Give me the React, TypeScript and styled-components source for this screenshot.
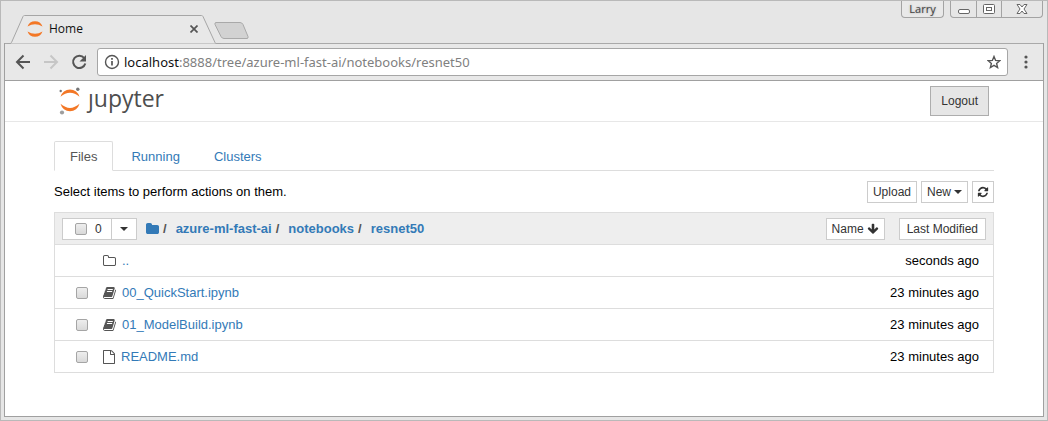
import React from "react";
import styled, { createGlobalStyle } from "styled-components";

const Global = createGlobalStyle`
  *, *::before, *::after { box-sizing: border-box; }
  body { margin: 0; font: 13px/20px "Liberation Sans", Arial, sans-serif; color: #000; background: #fff; }
  button, input { font: inherit; margin: 0; }
  a { color: #337ab7; text-decoration: none; }
`;

const Window = styled.div`
  min-height: 100vh;
  display: flex;
  flex-direction: column;
  padding: 0 3px 3px;
  border: 1px solid #b9b9b9;
  background: #e6e6e6;
`;

const TitleBar = styled.header`
  display: flex;
  justify-content: space-between;
  height: 42px;
`;

const TabStrip = styled.div`
  display: flex;
  align-items: flex-end;
`;

const BrowserTab = styled.div`
  position: relative;
  display: flex;
  align-items: center;
  width: 214px;
  height: 28px;
  margin-left: 3px;
  padding: 0 23px 0 20px;
  font: 12px/20px "Open Sans", "Noto Sans", sans-serif;
  color: #111;
`;

const TabShape = styled.svg`
  position: absolute;
  inset: 0;
  width: 214px;
  height: 29px;
`;

const TabTitle = styled.span`
  position: relative;
  flex: 1;
  margin-left: 6px;
`;

const TabIcon = styled.svg`
  position: relative;
`;

const BareButton = styled.button`
  position: relative;
  display: flex;
  align-items: center;
  justify-content: center;
  padding: 0;
  border: 0;
  background: none;
  color: #555;
`;

const NewTab = styled(BareButton)`
  align-self: flex-end;
  margin: 0 0 3px -8px;
`;

const WindowControls = styled.div`
  display: flex;
  align-items: flex-start;
  padding-right: 1px;
`;

const ProfileButton = styled.button`
  width: 43px;
  height: 17px;
  margin-right: 6px;
  padding: 0;
  border: 1px solid #a3a3a3;
  border-top: 0;
  border-radius: 0 0 4px 4px;
  background: #e9e9e9;
  color: #444;
  font: 11px/16px "Open Sans", "Noto Sans", sans-serif;
  text-shadow: 0 0 2px #999;
`;

const ControlGroup = styled.div`
  display: flex;
  height: 17px;
  border: 1px solid #a3a3a3;
  border-top: 0;
  border-radius: 0 0 4px 4px;
`;

const ControlButton = styled(BareButton)<{ $wide?: boolean }>`
  width: ${(p) => (p.$wide ? 41 : 25)}px;
  & + & { border-left: 1px solid #a3a3a3; }
`;

const Frame = styled.div`
  flex: 1;
  display: flex;
  flex-direction: column;
  border: 1px solid #a0a0a0;
  border-top: 0;
  background: #fff;
`;

const Toolbar = styled.div`
  display: flex;
  align-items: center;
  height: 38px;
  padding: 0 10px 0 8px;
  border-top: 1px solid #a9a9a9;
  border-bottom: 1px solid #a0a0a0;
  background: #e8e8e8;
`;

const NavButton = styled(BareButton)<{ $off?: boolean }>`
  width: 20px;
  height: 20px;
  margin-right: 8px;
  color: ${(p) => (p.$off ? "#c6c6c6" : "#555")};
`;

const AddressBar = styled.div`
  flex: 1;
  display: flex;
  align-items: center;
  height: 28px;
  padding: 0 6px;
  border: 1px solid #a6a6a6;
  border-radius: 3px;
  background: #fff;
  color: #808080;
  font: 13px/20px "Noto Sans", "Open Sans", sans-serif;
`;

const Address = styled.span`
  flex: 1;
  margin-left: 4px;
  white-space: nowrap;
`;

const Host = styled.span`
  color: #111;
`;

const MenuButton = styled(BareButton)`
  width: 15px;
  height: 20px;
  margin-left: 10px;
`;

const SiteHeader = styled.header`
  display: flex;
  align-items: center;
  justify-content: space-between;
  height: 41px;
  padding: 0 54px 0 54px;
  border-bottom: 1px solid #e7e7e7;
`;

const Logo = styled.a`
  display: flex;
  align-items: center;
  gap: 7px;
  color: #4e4e4e;
  font: 23px/32px "Open Sans", "Noto Sans", sans-serif;
`;

const Wordmark = styled.span`
  padding-bottom: 6px;
`;

const Logout = styled.button`
  height: 30px;
  padding: 0 10px;
  border: 1px solid #adadad;
  background: #e6e6e6;
  color: #333;
  font-size: 12px;
`;

const Main = styled.main`
  padding: 19px 49px 43px;
`;

const Tabs = styled.nav`
  display: flex;
  border-bottom: 1px solid #ddd;
`;

const TabLink = styled.a<{ $active?: boolean }>`
  height: 30px;
  margin: 0 2px -1px 0;
  padding: 5px 15px;
  border: 1px solid ${(p) => (p.$active ? "#ddd" : "transparent")};
  border-bottom-color: ${(p) => (p.$active ? "#fff" : "transparent")};
  border-radius: 2px 2px 0 0;
  color: ${(p) => (p.$active ? "#555" : "#337ab7")};
`;

const ActionRow = styled.div`
  display: flex;
  align-items: center;
  justify-content: space-between;
  padding: 10px 0 9px;
`;

const Actions = styled.div`
  display: flex;
  gap: 4px;
`;

const SmallButton = styled.button<{ $pad?: number }>`
  display: inline-flex;
  align-items: center;
  justify-content: center;
  gap: 3px;
  height: 22px;
  padding: 0 ${(p) => p.$pad ?? 5}px;
  border: 1px solid #ccc;
  background: #fff;
  color: #333;
  font-size: 12px;
  font-weight: 400;
  line-height: 18px;
`;

const FileTable = styled.table`
  width: 100%;
  border: 1px solid #ddd;
  border-spacing: 0;
`;

const HeadCell = styled.th<{ $right?: boolean }>`
  height: 31px;
  padding: 0 7px;
  background: #eee;
  text-align: ${(p) => (p.$right ? "right" : "left")};
`;

const HeadGroup = styled.div<{ $right?: boolean }>`
  display: flex;
  align-items: center;
  justify-content: ${(p) => (p.$right ? "flex-end" : "flex-start")};
  gap: ${(p) => (p.$right ? 14 : 0)}px;
`;

const Selector = styled.div`
  display: flex;
  height: 22px;
  margin-right: 9px;
  border: 1px solid #ccc;
  background: #fff;
  font-weight: 400;
`;

const SelectAll = styled.label`
  display: flex;
  align-items: center;
  gap: 8px;
  width: 48px;
  padding-left: 12px;
  font-size: 12px;
  color: #333;
`;

const SelectMenu = styled(BareButton)`
  width: 25px;
  border-left: 1px solid #ccc;
  color: #333;
`;

const Checkbox = styled.input.attrs({ type: "checkbox" })`
  appearance: none;
  display: block;
  flex: none;
  width: 12px;
  height: 12px;
  border: 1px solid #a5a5a5;
  border-radius: 2px;
  background: linear-gradient(#eee, #d9d9d9);
`;

const Crumbs = styled.nav`
  display: flex;
  align-items: center;
  color: #555;
`;

const CrumbLink = styled.a`
  display: flex;
  margin-right: 4px;
`;

const Slash = styled.span`
  margin-right: 9px;
`;

const Cell = styled.td<{ $kind: "check" | "name" | "time" }>`
  height: 32px;
  border-top: 1px solid #ddd;
  padding: 0 ${(p) => (p.$kind === "time" ? 14 : 0)}px 0 ${(p) => (p.$kind === "check" ? 21 : 0)}px;
  width: ${(p) => (p.$kind === "check" ? "48px" : "auto")};
  text-align: ${(p) => (p.$kind === "time" ? "right" : "left")};
  white-space: nowrap;
`;

const FileLink = styled.a`
  display: flex;
  align-items: center;
  gap: 6px;
  svg { color: #555; }
`;

const glyphs = {
  folder:
    "M1728 608v704q0 92-66 158t-158 66h-1216q-92 0-158-66t-66-158v-960q0-92 66-158t158-66h320q92 0 158 66t66 158v32h672q92 0 158 66t66 158z",
  folderOpen:
    "M1600 1312v-704q0-40-28-68t-68-28h-704q-40 0-68-28t-28-68v-64q0-40-28-68t-68-28h-320q-40 0-68 28t-28 68v960q0 40 28 68t68 28h1216q40 0 68-28t28-68zm128-704v704q0 92-66 158t-158 66h-1216q-92 0-158-66t-66-158v-960q0-92 66-158t158-66h320q92 0 158 66t66 158v32h672q92 0 158 66t66 158z",
  file:
    "M1596 380q28 28 48 76t20 88v1152q0 40-28 68t-68 28h-1344q-40 0-68-28t-28-68v-1600q0-40 28-68t68-28h896q40 0 88 20t76 48zm-444-244v376h376q-10-29-22-41l-313-313q-12-12-41-22zm384 1528v-1024h-416q-40 0-68-28t-28-68v-416h-768v1536h1280z",
  book:
    "M1703 478q40 57 18 129l-275 906q-19 64-76.5 107.5t-122.5 43.5h-923q-77 0-148.5-53.5t-99.5-131.5q-24-67-2-127 0-4 3-27t4-37q1-8-3-21.5t-3-19.5q2-11 8-21t16.5-23.5 16.5-23.5q23-38 45-91.5t30-91.5q3-10 .5-30t-.5-28q3-11 17-28t17-23q21-36 42-92t25-90q1-9-2.5-32t.5-28q4-13 22-30.5t22-22.5q19-26 42.5-84.5t27.5-96.5q1-8-3-25.5t-2-26.5q2-8 9-18t18-23 17-21q8-12 16.5-30.5t15-35 16-36 19.5-32 26.5-23.5 36-11.5 47.5 5.5l-1 3q38-9 51-9h761q74 0 114 56t18 130l-274 906q-36 119-71.5 153.5t-128.5 34.5h-869q-27 0-38 15-11 16-1 43 24 70 144 70h923q29 0 56-15.5t35-41.5l300-987q7-22 5-57 38 15 59 43zm-1064 2q-4 13 2 22.5t20 9.5h608q13 0 25.5-9.5t16.5-22.5l21-64q4-13-2-22.5t-20-9.5h-608q-13 0-25.5 9.5t-16.5 22.5zm-83 256q-4 13 2 22.5t20 9.5h608q13 0 25.5-9.5t16.5-22.5l21-64q4-13-2-22.5t-20-9.5h-608q-13 0-25.5 9.5t-16.5 22.5z",
  refresh:
    "M1639 1056q0 5-1 7-64 268-268 434.5t-478 166.5q-146 0-282.5-55t-243.5-157l-129 129q-19 19-45 19t-45-19-19-45v-448q0-26 19-45t45-19h448q26 0 45 19t19 45-19 45l-137 137q71 66 161 102t187 36q134 0 250-65t186-179q11-17 53-117 8-23 30-23h192q13 0 22.5 9.5t9.5 22.5zm25-800v448q0 26-19 45t-45 19h-448q-26 0-45-19t-19-45 19-45l138-138q-148-137-349-137-134 0-250 65t-186 179q-11 17-53 117-8 23-30 23h-199q-13 0-22.5-9.5t-9.5-22.5v-7q65-268 270-434.5t480-166.5q146 0 284 55.5t245 156.5l130-129q19-19 45-19t45 19 19 45z",
  arrowDown:
    "M1675 832q0 53-37 90l-651 652q-39 37-91 37-53 0-90-37l-651-652q-38-36-38-90 0-53 38-91l74-75q39-37 91-37 53 0 90 37l294 294v-704q0-52 38-90t90-38h128q52 0 90 38t38 90v704l294-294q37-37 90-37 52 0 91 37l75 75q37 39 37 91z",
};

const Glyph = ({ name, size = 14, width = size }: { name: keyof typeof glyphs; size?: number; width?: number }) => {
  const unit = 1792 / size;
  const inset = ((size - width) / 2) * unit;
  return (
    <svg width={width} height={size} viewBox={`${inset} 0 ${width * unit} 1792`} fill="currentColor" aria-hidden="true">
      <path d={glyphs[name]} />
    </svg>
  );
};

const Caret = () => (
  <svg width="8" height="4" viewBox="0 0 8 4" fill="currentColor" aria-hidden="true">
    <path d="M0 0h8L4 4z" />
  </svg>
);

const files: { icon: keyof typeof glyphs; name: string; time: string; up?: boolean }[] = [
  { icon: "folderOpen", name: "..", time: "seconds ago", up: true },
  { icon: "book", name: "00_QuickStart.ipynb", time: "23 minutes ago" },
  { icon: "book", name: "01_ModelBuild.ipynb", time: "23 minutes ago" },
  { icon: "file", name: "README.md", time: "23 minutes ago" },
];

export default function App() {
  return (
    <>
      <Global />
      <Window>
        <TitleBar>
          <TabStrip>
            <BrowserTab>
              <TabShape viewBox="0 0 214 29" fill="#e8e8e8" stroke="#a6a6a6" aria-hidden="true">
                <path d="M-2 28.500h5q1 0 1.500-1L16 1.500q.5-1 1.500-1h177q1 0 1.500 1l12 26q.5 1 1.500 1h5" />
              </TabShape>
              <TabIcon width="16" height="16" viewBox="0 0 16 16" fill="#f37726" aria-hidden="true">
                <path d="M.5 5.500a8 8 0 0 1 15 0Q8 .8.5 5.500zM.5 10.500a8 8 0 0 0 15 0Q8 15.200.5 10.500z" />
              </TabIcon>
              <TabTitle>Home</TabTitle>
              <BareButton aria-label="Close tab">
                <svg width="8" height="8" viewBox="0 0 8 8" stroke="currentColor" strokeWidth="1.700">
                  <path d="M.5.5l7 7M7.500.5l-7 7" />
                </svg>
              </BareButton>
            </BrowserTab>
            <NewTab aria-label="New tab">
              <svg width="36" height="18" viewBox="0 0 36 18" fill="#d2d2d2" stroke="#a9a9a9">
                <path d="M3 .5h24q2 0 3 2l5 12q.5 2-1 2H11q-2 0-3-2l-6-12q-.5-2 1-2z" />
              </svg>
            </NewTab>
          </TabStrip>
          <WindowControls>
            <ProfileButton>Larry</ProfileButton>
            <ControlGroup>
              <ControlButton aria-label="Minimize">
                <svg width="12" height="14" viewBox="0 0 12 14" fill="#fff" stroke="#666">
                  <rect x=".5" y="7.500" width="11" height="4" rx="1.500" />
                </svg>
              </ControlButton>
              <ControlButton aria-label="Maximize">
                <svg width="12" height="12" viewBox="0 0 12 12" fill="#fff" stroke="#666">
                  <rect x=".5" y="1.500" width="11" height="9" rx="1" />
                  <rect x="3.500" y="4.500" width="5" height="3" />
                </svg>
              </ControlButton>
              <ControlButton $wide aria-label="Close">
                <svg width="12" height="12" viewBox="0 0 12 12" fill="#fff" stroke="#666">
                  <path d="M1 1.500h3l2 2.500 2-2.500h3L8 6l3 4.500H8L6 8l-2 2.500H1L4 6z" />
                </svg>
              </ControlButton>
            </ControlGroup>
          </WindowControls>
        </TitleBar>
        <Frame>
          <Toolbar>
            <NavButton aria-label="Back">
              <svg width="16" height="16" viewBox="0 0 16 16" fill="none" stroke="currentColor" strokeWidth="2">
                <path d="M15 8H2.500M8.500 1.500L2 8l6.500 6.500" />
              </svg>
            </NavButton>
            <NavButton $off aria-label="Forward">
              <svg width="16" height="16" viewBox="0 0 16 16" fill="none" stroke="currentColor" strokeWidth="2">
                <path d="M1 8h12.500M7.500 1.500L14 8l-6.500 6.500" />
              </svg>
            </NavButton>
            <NavButton aria-label="Reload">
              <svg width="16" height="16" viewBox="0 0 16 16" fill="none">
                <path d="M13.200 4A6.200 6.200 0 1 0 14.300 9.500" stroke="currentColor" strokeWidth="2" />
                <path d="M15 1v6.500H8.500z" fill="currentColor" />
              </svg>
            </NavButton>
            <AddressBar>
              <svg width="16" height="16" viewBox="0 0 16 16" fill="none" stroke="#555" aria-hidden="true">
                <circle cx="8" cy="8" r="6.500" strokeWidth="1.400" />
                <path d="M8 7v4.500M8 4v1.800" strokeWidth="1.700" />
              </svg>
              <Address>
                <Host>localhost</Host>:8888/tree/azure-ml-fast-ai/notebooks/resnet50
              </Address>
              <BareButton aria-label="Bookmark this page">
                <svg width="14" height="14" viewBox="0 0 14 14" fill="none" stroke="currentColor" strokeWidth="1.400">
                  <path d="M7 1.500l1.600 3.900 4.200.3-3.200 2.700 1 4.100L7 10.300l-3.600 2.200 1-4.100L1.200 5.700l4.200-.3z" />
                </svg>
              </BareButton>
            </AddressBar>
            <MenuButton aria-label="Menu">
              <svg width="4" height="14" viewBox="0 0 4 14" fill="currentColor">
                <circle cx="2" cy="2" r="1.600" />
                <circle cx="2" cy="7" r="1.600" />
                <circle cx="2" cy="12" r="1.600" />
              </svg>
            </MenuButton>
          </Toolbar>
          <SiteHeader>
            <Logo href="#" aria-label="jupyter">
              <svg width="22" height="28" viewBox="0 0 22 28" aria-hidden="true">
                <path d="M1.500 9.800a9.800 9.800 0 0 1 19 0Q11 1.500 1.500 9.800zM1.500 16.800a9.800 9.800 0 0 0 19 0Q11 25.100 1.500 16.800z" fill="#f37726" />
                <circle cx="18.800" cy="2.200" r="1.700" fill="#767677" />
                <circle cx="1.700" cy="4" r="1.200" fill="#767677" />
                <circle cx="3" cy="25.500" r="2.100" fill="#9e9e9e" />
              </svg>
              <Wordmark>ȷupyter</Wordmark>
            </Logo>
            <Logout>Logout</Logout>
          </SiteHeader>
          <Main>
            <Tabs>
              <TabLink href="#files" $active>Files</TabLink>
              <TabLink href="#running">Running</TabLink>
              <TabLink href="#clusters">Clusters</TabLink>
            </Tabs>
            <ActionRow>
              <span>Select items to perform actions on them.</span>
              <Actions>
                <SmallButton>Upload</SmallButton>
                <SmallButton>
                  New <Caret />
                </SmallButton>
                <SmallButton $pad={4} aria-label="Refresh">
                  <Glyph name="refresh" size={12} />
                </SmallButton>
              </Actions>
            </ActionRow>
            <FileTable>
              <thead>
                <tr>
                  <HeadCell colSpan={2}>
                    <HeadGroup>
                      <Selector>
                        <SelectAll>
                          <Checkbox /> 0
                        </SelectAll>
                        <SelectMenu aria-label="Select by type">
                          <Caret />
                        </SelectMenu>
                      </Selector>
                      <Crumbs aria-label="Path">
                        <CrumbLink href="#" aria-label="Root folder">
                          <Glyph name="folder" width={13} />
                        </CrumbLink>
                        <Slash>/</Slash>
                        <CrumbLink href="#azure-ml-fast-ai">azure-ml-fast-ai</CrumbLink>
                        <Slash>/</Slash>
                        <CrumbLink href="#notebooks">notebooks</CrumbLink>
                        <Slash>/</Slash>
                        <CrumbLink href="#resnet50">resnet50</CrumbLink>
                      </Crumbs>
                    </HeadGroup>
                  </HeadCell>
                  <HeadCell $right>
                    <HeadGroup $right>
                      <SmallButton>
                        Name <Glyph name="arrowDown" size={12} />
                      </SmallButton>
                      <SmallButton $pad={7}>Last Modified</SmallButton>
                    </HeadGroup>
                  </HeadCell>
                </tr>
              </thead>
              <tbody>
                {files.map((f) => (
                  <tr key={f.name}>
                    <Cell $kind="check">{!f.up && <Checkbox aria-label={f.name} />}</Cell>
                    <Cell $kind="name">
                      <FileLink href={"#" + f.name}>
                        <Glyph name={f.icon} width={f.icon === "file" ? 12 : 13} />
                        {f.name}
                      </FileLink>
                    </Cell>
                    <Cell $kind="time">{f.time}</Cell>
                  </tr>
                ))}
              </tbody>
            </FileTable>
          </Main>
        </Frame>
      </Window>
    </>
  );
}
